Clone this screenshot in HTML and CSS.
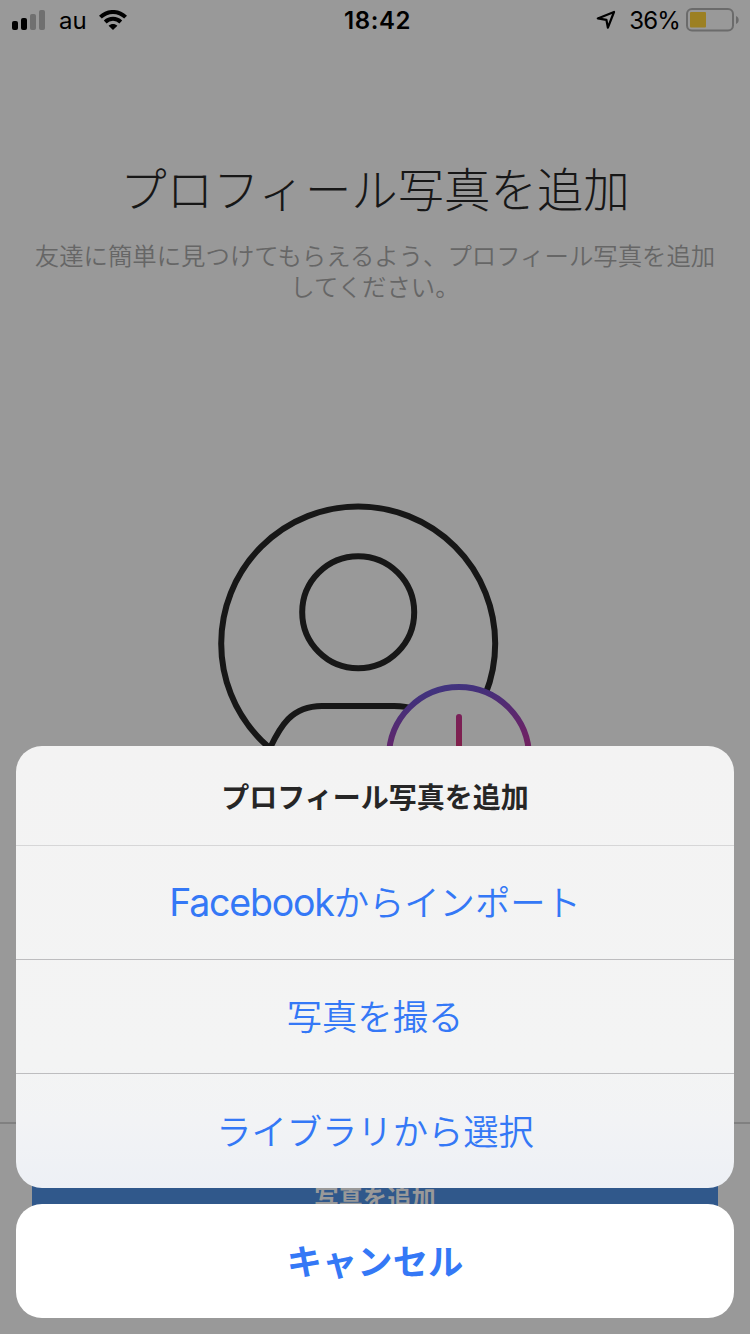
FILE: index.html
```html
<!doctype html>
<html lang="ja">
    <head>
        <meta charset="UTF-8" />
        <meta name="viewport" content="width=device-width, initial-scale=1.0" />
        <title>プロフィール写真を追加</title>
        <link rel="stylesheet" href="styles.css">
    </head>
    <body>
        <div class="screen">
            <!-- Status bar -->
            <header class="status-bar">
                <div class="status-left">
                    <svg class="signal" width="34" height="20" viewBox="0 0 34 20">
                        <rect x="0" y="11" width="6" height="9" rx="2" />
                        <rect x="9" y="8" width="6" height="12" rx="2" />
                        <rect class="off" x="18" y="4" width="6" height="16" rx="2" />
                        <rect class="off" x="27" y="0" width="6" height="20" rx="2" />
                    </svg>
                    <span class="carrier">au</span>
                    <svg class="wifi" width="28" height="20" viewBox="0 0 28 20">
                        <path d="M1.4 7.2C8.5 .2 19.5 .2 26.6 7.2M6.2 12C10.6 7.8 17.4 7.8 21.8 12" />
                        <path class="dot" d="M9.6 15.8C12.2 13.5 15.8 13.5 18.4 15.8L14 20Z" />
                    </svg>
                </div>
                <span class="time">18:42</span>
                <div class="status-right">
                    <svg class="location" width="20" height="20" viewBox="0 0 20 20">
                        <path d="M1.8 8.4L18 2L11.9 17.7L10.4 9.8Z" />
                    </svg>
                    <span class="percent">36%</span>
                    <svg class="battery" width="53" height="24" viewBox="0 0 53 24">
                        <rect class="case" x="1" y="1" width="46" height="21.5" rx="5" />
                        <rect class="level" x="4" y="4" width="16" height="15.5" rx="1" />
                        <path class="tip" d="M50 8C53.6 9.2 53.6 14.8 50 16Z" />
                    </svg>
                </div>
            </header>

            <main class="content">
                <h1>プロフィール写真を追加</h1>
                <p class="lead">友達に簡単に見つけてもらえるよう、プロフィール写真を追加<br>してください。</p>

                <svg class="avatar" width="320" height="340" viewBox="215 500 320 340">
                    <defs>
                        <linearGradient id="badgeRing" gradientUnits="userSpaceOnUse" x1="430" y1="684" x2="459" y2="830">
                            <stop offset="0" stop-color="#403681" />
                            <stop offset="0.1" stop-color="#44307a" />
                            <stop offset="0.45" stop-color="#6b2367" />
                            <stop offset="1" stop-color="#85203a" />
                        </linearGradient>
                        <linearGradient id="badgePlus" gradientUnits="userSpaceOnUse" x1="459" y1="714" x2="459" y2="800">
                            <stop offset="0" stop-color="#792059" />
                            <stop offset="1" stop-color="#8c2034" />
                        </linearGradient>
                    </defs>
                    <g class="person">
                        <circle cx="358.2" cy="643.5" r="137" />
                        <circle cx="358.2" cy="612.2" r="56" />
                        <path d="M270 748C280 727 291 706 322 706H394C430 706 438 727 446 748" />
                    </g>
                    <circle class="badge" cx="459" cy="757" r="70" />
                    <path class="plus" d="M459 717V797M419 757H499" />
                </svg>
            </main>

            <footer class="bottom-bar">
                <button class="add-button">写真を追加</button>
            </footer>

            <!-- Action sheet -->
            <div class="action-sheet">
                <div class="sheet-group">
                    <h2>プロフィール写真を追加</h2>
                    <button><span class="latin">Facebook</span>からインポート</button>
                    <button>写真を撮る</button>
                    <button>ライブラリから選択</button>
                </div>
                <button class="cancel">キャンセル</button>
            </div>
        </div>
    </body>
</html>
```
FILE: styles.css
```css
* {
    box-sizing: border-box;
}

body {
    margin: 0;
    font-family: "Noto Sans CJK JP", sans-serif;
    background-color: #999;
}

h1,
h2,
p {
    margin: 0;
}

button {
    border: none;
    padding: 0;
    font-family: inherit;
    cursor: pointer;
}

svg {
    display: block;
}

.screen {
    position: relative;
    display: flex;
    flex-direction: column;
    width: 750px;
    height: 1334px;
    overflow: hidden;
    background-color: #999;
}

/* Status bar */
.status-bar {
    display: grid;
    grid-template-columns: 1fr auto 1fr;
    align-items: center;
    height: 40px;
    padding: 0 11px 0 12px;
    font-family: Inter, sans-serif;
    font-size: 24px;
    line-height: 38px;
    color: #000;
}

.status-bar span {
    padding-top: 2px;
}

.status-left,
.status-right {
    display: flex;
    align-items: center;
}

.status-right {
    justify-content: flex-end;
}

.signal .off {
    fill: #707070;
}

.carrier {
    margin-left: 13px;
}

.wifi {
    margin-left: 12px;
    fill: none;
    stroke: #000;
    stroke-width: 4;
}

.wifi .dot {
    fill: #000;
    stroke: none;
}

.time {
    padding-left: 4px;
    font-weight: 600;
    letter-spacing: 0.6px;
}

.location {
    margin-right: 13px;
    fill: none;
    stroke: #000;
    stroke-width: 2.2;
    stroke-linejoin: round;
}

.percent {
    letter-spacing: -0.8px;
}

.battery {
    margin-left: 6px;
}

.battery .case {
    fill: none;
    stroke: #6b6b6b;
    stroke-width: 2;
}

.battery .level {
    fill: #9c8022;
}

.battery .tip {
    fill: #6b6b6b;
}

/* Page behind the sheet */
.content {
    flex: 1;
    display: flex;
    flex-direction: column;
    align-items: center;
    padding-top: 112px;
    text-align: center;
}

h1 {
    font-size: 46.4px;
    font-weight: 300;
    line-height: 70px;
    color: #171717;
}

.lead {
    margin-top: 17px;
    font-size: 24.4px;
    font-weight: 350;
    line-height: 31px;
    white-space: nowrap;
    color: #666;
}

.avatar {
    margin-top: 199px;
}

.person {
    fill: none;
    stroke: #171717;
    stroke-width: 6;
}

.badge {
    fill: #999;
    stroke: url(#badgeRing);
    stroke-width: 6;
}

.plus {
    fill: none;
    stroke: url(#badgePlus);
    stroke-width: 6;
    stroke-linecap: round;
}

.bottom-bar {
    height: 212px;
    padding: 30px 32px 0;
    border-top: 2px solid #808080;
}

.add-button {
    width: 100%;
    height: 88px;
    padding-bottom: 4px;
    background-color: #30588b;
    color: #999;
    font-size: 24.3px;
    font-weight: 700;
}

/* Action sheet */
.action-sheet {
    position: absolute;
    left: 16px;
    right: 16px;
    bottom: 16px;
    display: flex;
    flex-direction: column;
    gap: 16px;
}

.sheet-group {
    border-radius: 26px;
    overflow: hidden;
    background: linear-gradient(#f3f3f3 0, #f3f4f4 72%, #f2f3f5 85%, #edf0f5 100%);
}

.sheet-group h2 {
    height: 99px;
    font-size: 28px;
    font-weight: 700;
    line-height: 100px;
    text-align: center;
    color: #262626;
}

.sheet-group button,
.cancel {
    display: block;
    width: 100%;
    height: 114px;
    padding-bottom: 4px;
    font-size: 35.3px;
    color: #3478f6;
}

.sheet-group button {
    border-top: 1px solid #bdbdbf;
    background: none;
    font-weight: 350;
}

.sheet-group h2 + button {
    border-top-color: #d6d6d7;
}

.sheet-group button:last-child {
    height: 115px;
}

.latin {
    font-family: Inter, sans-serif;
    font-size: 37.5px;
    font-weight: 400;
    letter-spacing: -1.2px;
}

.cancel {
    border-radius: 26px;
    background-color: #fff;
    font-weight: 700;
}
```
